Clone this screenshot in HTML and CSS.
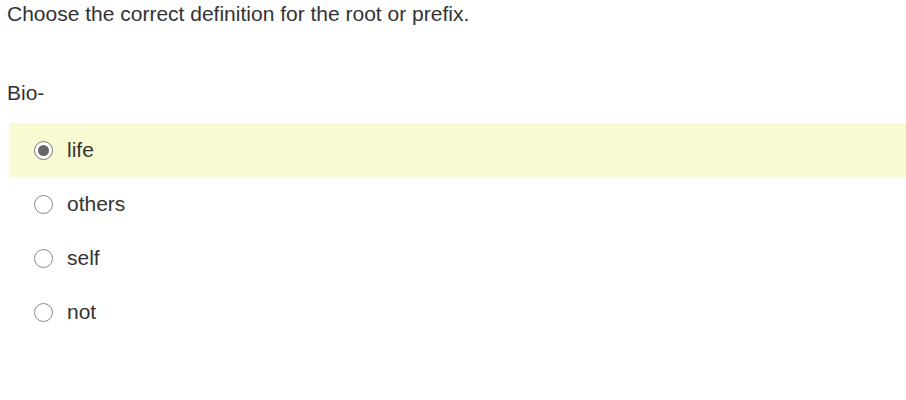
FILE: index.html
```html
<!DOCTYPE html>
<html lang="en">
  <head>
    <meta charset="UTF-8" />
    <title>Question</title>
    <link rel="stylesheet" href="styles.css">
  </head>
  <body>
    <div class="question">
      <p class="prompt">Choose the correct definition for the root or prefix.</p>
      <p class="term">Bio-</p>

      <ul class="choices">
        <li class="choice selected">
          <span class="radio checked"></span>
          <span class="label">life</span>
        </li>
        <li class="choice">
          <span class="radio"></span>
          <span class="label">others</span>
        </li>
        <li class="choice">
          <span class="radio"></span>
          <span class="label">self</span>
        </li>
        <li class="choice">
          <span class="radio"></span>
          <span class="label">not</span>
        </li>
      </ul>
    </div>
  </body>
</html>
```

FILE: styles.css
```css
body {
  font-family: "Liberation Sans", Arial, sans-serif;
  margin: 0;
  padding: 0;
  background-color: #ffffff;
  color: #333333;
}
.question {
  padding: 2px 0 0 7px;
}
.prompt {
  font-size: 21px;
  margin: 0;
  line-height: 24px;
}
.term {
  font-size: 21px;
  margin: 55px 0 0 0;
  line-height: 24px;
}
/* Список вариантов */
.choices {
  list-style: none;
  margin: 18px 0 0 2px;
  padding: 0;
}
.choice {
  display: flex;
  align-items: center;
  height: 54px;
  padding-left: 25px;
  font-size: 21px;
}
.choice.selected {
  background-color: #fafad2;
}
.radio {
  width: 17px;
  height: 17px;
  border: 1px solid #8a8a8a;
  border-radius: 50%;
  background: #ffffff;
  margin-right: 14px;
  box-sizing: content-box;
  position: relative;
}
.radio.checked {
  border-color: #777777;
}
.radio.checked::after {
  content: '';
  position: absolute;
  left: 3px;
  top: 3px;
  width: 11px;
  height: 11px;
  border-radius: 50%;
  background: #666666;
}
```
